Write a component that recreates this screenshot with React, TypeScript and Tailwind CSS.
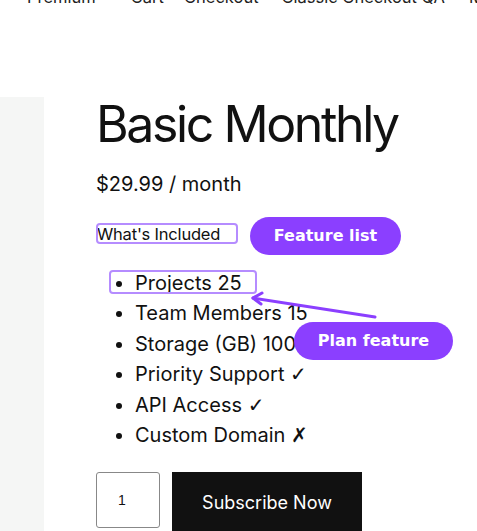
import React from "react";

const features: { label: string; mark?: string }[] = [
  { label: "Projects 25" },
  { label: "Team Members 15" },
  { label: "Storage (GB) 100" },
  { label: "Priority Support", mark: "✓" },
  { label: "API Access", mark: "✓" },
  { label: "Custom Domain", mark: "✗" },
];

const navItems = [
  { label: "Premium", x: "ml-[27px]" },
  { label: "Cart", x: "ml-[35px]" },
  { label: "Checkout", x: "ml-[20px]" },
  { label: "Classic Checkout QA", x: "ml-[23px]" },
  { label: "My Account", x: "ml-[24px]" },
];

export default function App() {
  const sans = { fontFamily: "Inter, 'Noto Sans', sans-serif" };
  return (
    <div className="relative w-[477px] h-[531px] overflow-hidden bg-white text-[#111]" style={sans}>
      {/* top navigation, scrolled partly out of view */}
      <nav className="flex whitespace-nowrap text-[16.5px] leading-[20px] -mt-[13px] h-[110px] text-[#222]">
        {navItems.map((n) => (
          <span key={n.label} className={n.x}>
            {n.label}
          </span>
        ))}
      </nav>

      <div className="flex">
        <aside className="w-[44px] h-[440px] bg-[#f5f6f5] shrink-0" />
        <main className="pl-[52px] -mt-[3px]">
          <h1 className="text-[50px] leading-[60px] tracking-[-2.4px] font-normal">Basic Monthly</h1>
          <p className="mt-[18px] text-[20px] leading-[24px]">$29.99 / month</p>
          <h2 className="mt-[28px] text-[16.5px] leading-[20px] font-normal pl-[1px] tracking-[-0.2px]">
            What's Included
          </h2>
          <ul className="mt-[24px] list-disc pl-[39px] text-[20px] leading-[30.4px]">
            {features.map((f) => (
              <li key={f.label}>
                {f.label}
                {f.mark && (
                  <>
                    {" "}
                    <span className="font-bold" style={{ fontFamily: "'DejaVu Sans', sans-serif" }}>
                      {f.mark}
                    </span>
                  </>
                )}
              </li>
            ))}
          </ul>
          <div className="mt-[22px] flex gap-[12px]">
            <input
              defaultValue="1"
              className="w-[64px] h-[56px] border border-[#888] rounded-[3px] pl-[21px] text-[14px]"
              style={{ fontFamily: "'Liberation Sans', Arial, sans-serif" }}
            />
            <button className="w-[190px] h-[60px] bg-[#111] text-white text-[18px]">Subscribe Now</button>
          </div>
        </main>
      </div>

      {/* annotation overlays */}
      <div className="absolute left-[96px] top-[223px] w-[142px] h-[21px] border-2 border-[#b58cff] rounded-[4px]" />
      <div className="absolute left-[109px] top-[270px] w-[148px] h-[24px] border-2 border-[#b58cff] rounded-[4px]" />
      <svg className="absolute left-0 top-0" width="477" height="531">
        <path d="M375 317 L253 298" stroke="#8b3fff" strokeWidth="3" strokeLinecap="round" fill="none" />
        <path d="M262 293 L253 298 L261 304" stroke="#8b3fff" strokeWidth="3" strokeLinecap="round" strokeLinejoin="round" fill="none" />
      </svg>
      <div
        className="absolute left-[250px] top-[217px] w-[151px] h-[38px] rounded-full bg-[#8b3fff] text-white font-bold text-[16px] flex items-center justify-center"
        style={{ fontFamily: "'DejaVu Sans', sans-serif" }}
      >
        Feature list
      </div>
      <div
        className="absolute left-[294px] top-[322px] w-[159px] h-[38px] rounded-full bg-[#8b3fff] text-white font-bold text-[16px] flex items-center justify-center"
        style={{ fontFamily: "'DejaVu Sans', sans-serif" }}
      >
        Plan feature
      </div>
    </div>
  );
}
